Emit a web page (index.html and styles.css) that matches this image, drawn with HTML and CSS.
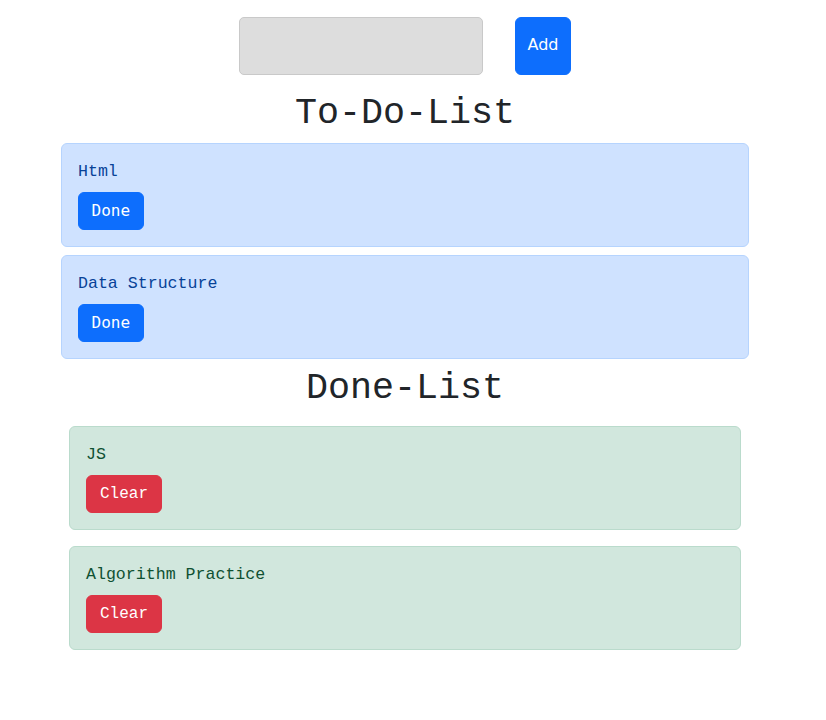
FILE: index.html
```html
<!DOCTYPE html>
<html lang="en">
<head>
<meta charset="utf-8">
<title>To-Do-List</title>
<link rel="stylesheet" href="styles.css">
</head>
<body>
<div class="page">
  <div class="add-row">
    <input class="task-input" type="text" aria-label="New task">
    <button class="btn btn-primary btn-add">Add</button>
  </div>
  <div class="container">
    <h1 class="title title-todo">To-Do-List</h1>
    <div class="todo-list">
      <div class="card card-todo">
        <p class="card-text">Html</p>
        <button class="btn btn-primary btn-done">Done</button>
      </div>
      <div class="card card-todo">
        <p class="card-text">Data Structure</p>
        <button class="btn btn-primary btn-done">Done</button>
      </div>
    </div>
    <h1 class="title title-done">Done-List</h1>
    <div class="done-list">
      <div class="card card-done">
        <p class="card-text">JS</p>
        <button class="btn btn-danger btn-clear">Clear</button>
      </div>
      <div class="card card-done">
        <p class="card-text">Algorithm Practice</p>
        <button class="btn btn-danger btn-clear">Clear</button>
      </div>
    </div>
  </div>
</div>
</body>
</html>
```
FILE: styles.css
```css
html, body {
  margin: 0;
  padding: 0;
  background: #ffffff;
}

body {
  font-family: "Liberation Mono", monospace;
  color: #212529;
}

.page {
  width: 810px;
}

.add-row {
  display: flex;
  justify-content: center;
  align-items: stretch;
  gap: 32px;
  padding-top: 17px;
}

.task-input {
  box-sizing: border-box;
  width: 244px;
  height: 58px;
  margin: 0;
  background: #dddddd;
  border: 1px solid #c9c9c9;
  border-radius: 5px;
  outline: none;
}

.btn {
  box-sizing: border-box;
  border: 1px solid transparent;
  border-radius: 6px;
  padding: 6px 12px;
  font-size: 16px;
  line-height: 24px;
  color: #ffffff;
  cursor: pointer;
  margin: 0;
}

.btn-primary {
  background: #0d6efd;
  border-color: #0d6efd;
}

.btn-danger {
  background: #dc3545;
  border-color: #dc3545;
}

.btn-add {
  font-family: "DejaVu Sans", sans-serif;
  width: 56px;
  padding: 15px 0 0;
  display: flex;
  justify-content: center;
  align-items: flex-start;
}

.btn-done {
  font-family: "DejaVu Sans Mono", monospace;
  padding: 6px 12.5px;
}

.btn-clear {
  font-family: "Liberation Mono", monospace;
  padding: 6px 13px;
}

.container {
  width: 688px;
  margin: 0 auto;
  display: flex;
  flex-direction: column;
}

.title {
  font-family: "Liberation Mono", monospace;
  font-weight: 400;
  font-size: 36.7px;
  line-height: 44px;
  text-align: center;
  color: #212529;
  margin: 0;
}

.title-todo {
  margin-top: 16px;
  margin-bottom: 8px;
}

.title-done {
  margin-top: 7px;
  margin-bottom: 16px;
}

.todo-list {
  display: flex;
  flex-direction: column;
  gap: 8px;
}

.card {
  box-sizing: border-box;
  border: 1px solid transparent;
  border-radius: 6px;
  padding: 16px;
  height: 104px;
}

.card-text {
  margin: 0 0 8px 0;
  font-size: 16.6px;
  line-height: 24px;
}

.card-todo {
  background: #cfe2ff;
  border-color: #b6d4fe;
  color: #084298;
}

.done-list {
  display: flex;
  flex-direction: column;
  gap: 16px;
  padding: 0 8px;
}

.card-done {
  background: #d1e7dd;
  border-color: #badbcc;
  color: #0f5132;
}
```
